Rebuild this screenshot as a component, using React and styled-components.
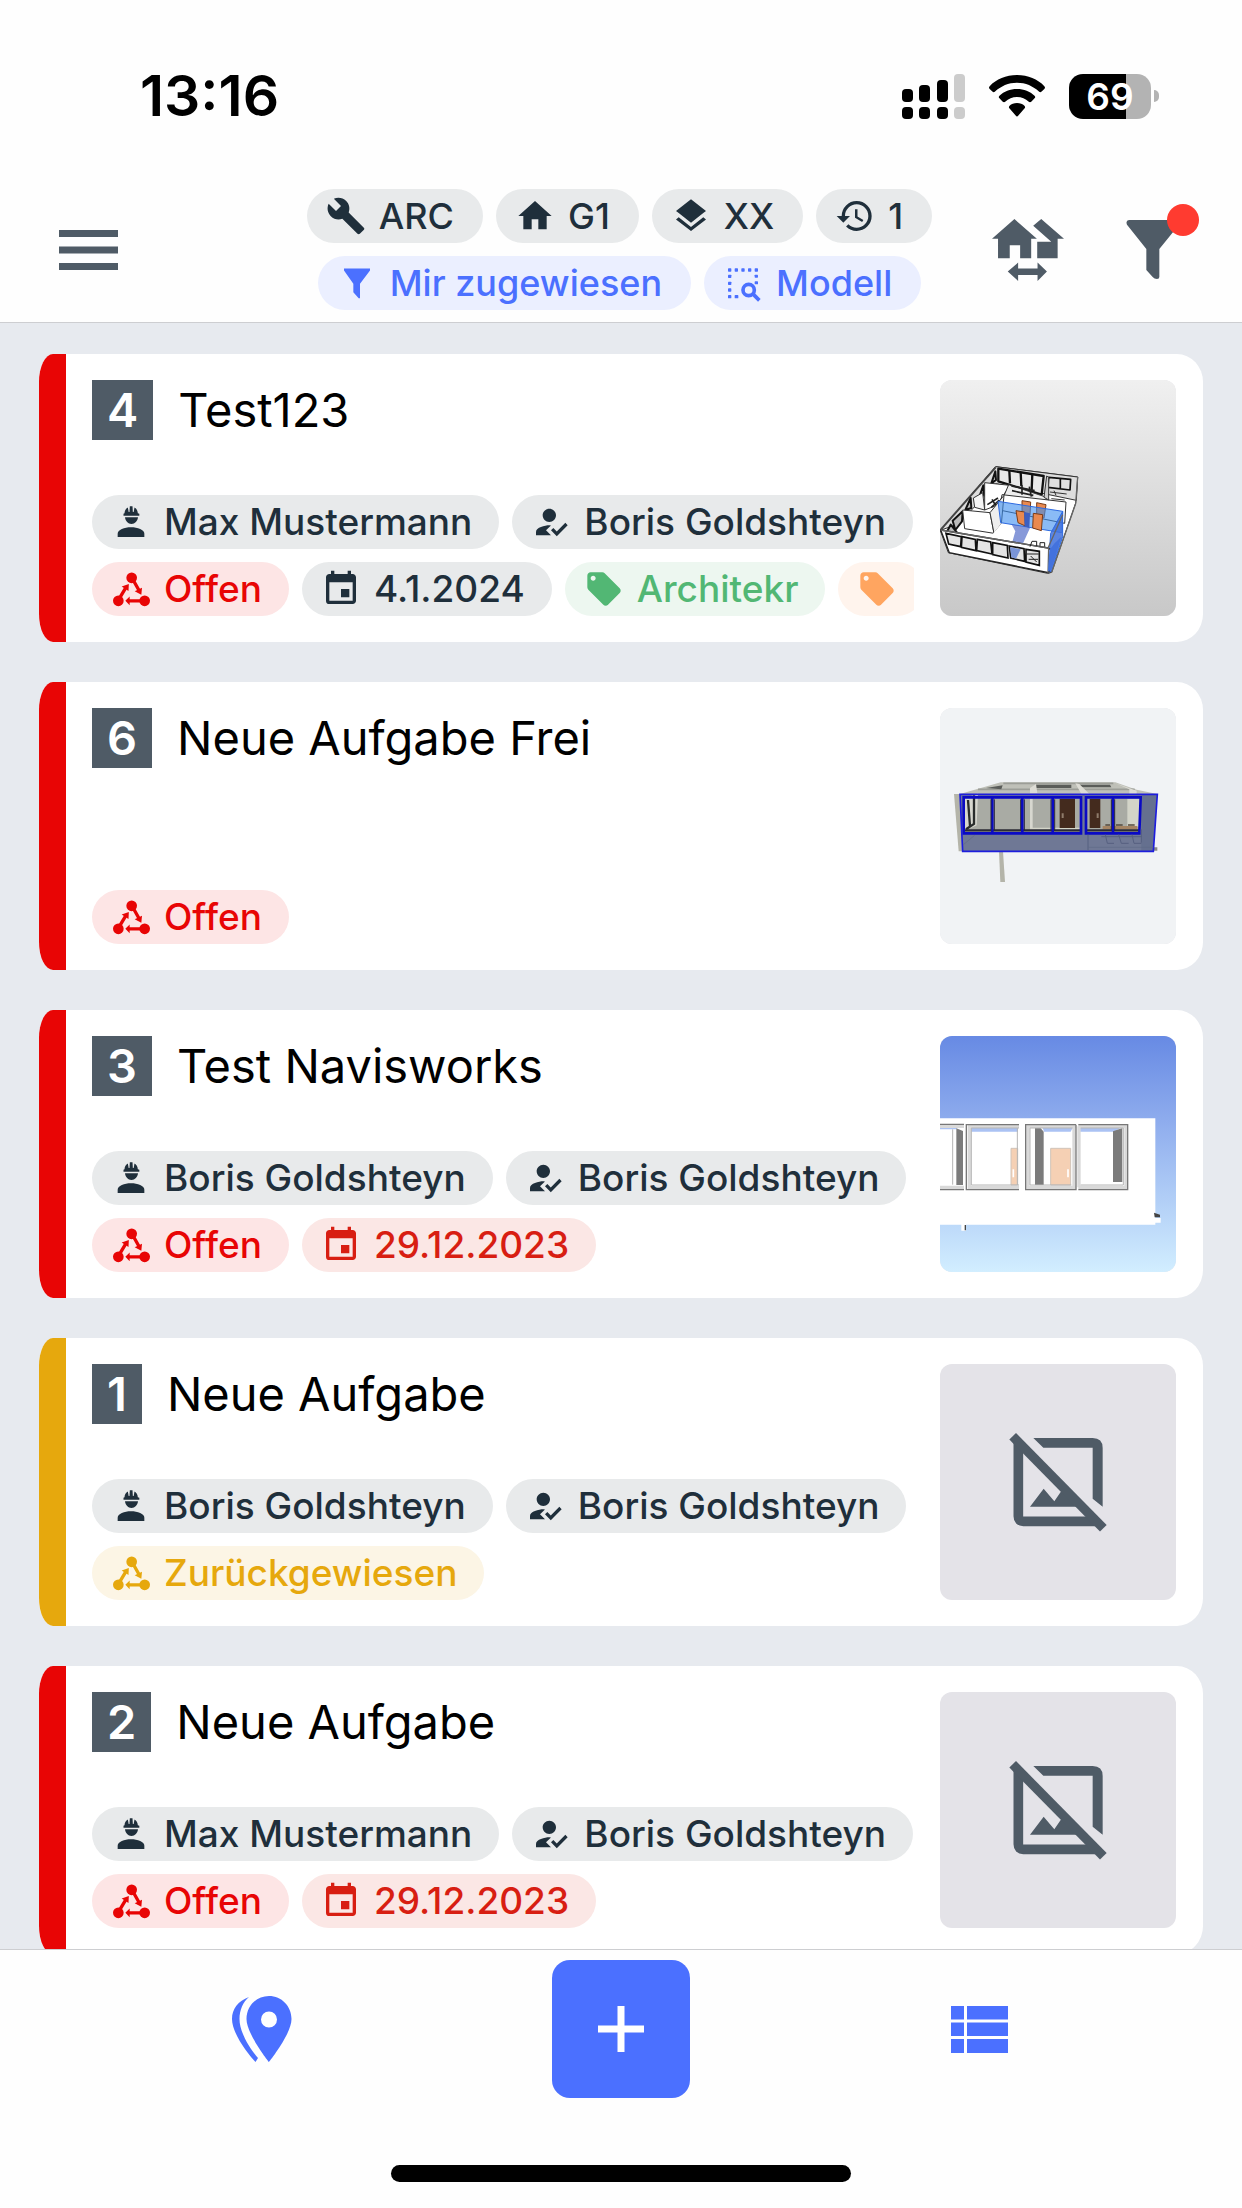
import React from "react";
import styled, { createGlobalStyle } from "styled-components";
import {
	MdBuild,
	MdEvent,
	MdHistory,
	MdHome,
	MdHowToReg,
	MdLayers,
	MdLocalOffer,
} from "react-icons/md";

const tones = {
	neutral: { color: "#1f2f3b", background: "#e8eaeb" },
	primary: { color: "#4b70ff", background: "#ebefff" },
	open: { color: "#e80505", background: "#fde5e5" },
	overdue: { color: "#d81e12", background: "#fbe7e5" },
	rejected: { color: "#e6a80d", background: "#fcf5e5" },
	green: { color: "#52b774", background: "#edf7f0" },
	orange: { color: "#ffa560", background: "#fff4ed" },
};

const filters = [
	[
		{ icon: MdBuild, label: "ARC" },
		{ icon: MdHome, label: "G1" },
		{ icon: MdLayers, label: "XX" },
		{ icon: MdHistory, label: "1" },
	],
	[
		{ icon: FunnelIcon, label: "Mir zugewiesen", tone: "primary" },
		{ icon: SelectSearchIcon, label: "Modell", tone: "primary" },
	],
];

const worker = (label) => ({ icon: WorkerIcon, label });
const assignee = (label) => ({ icon: MdHowToReg, label });
const status = (label, tone) => ({ icon: WorkflowIcon, label, tone });
const date = (label, tone) => ({ icon: MdEvent, label, tone });
const tag = (label, tone) => ({ icon: MdLocalOffer, label, tone });

const tasks = [
	{
		number: 4,
		title: "Test123",
		color: "#e80505",
		preview: FloorPlanPreview,
		rows: [
			[worker("Max Mustermann"), assignee("Boris Goldshteyn")],
			[
				status("Offen", "open"),
				date("4.1.2024"),
				tag("Architekr", "green"),
				tag("", "orange"),
			],
		],
	},
	{
		number: 6,
		title: "Neue Aufgabe Frei",
		color: "#e80505",
		preview: FacadePreview,
		rows: [[status("Offen", "open")]],
	},
	{
		number: 3,
		title: "Test Navisworks",
		color: "#e80505",
		preview: NavisworksPreview,
		rows: [
			[worker("Boris Goldshteyn"), assignee("Boris Goldshteyn")],
			[status("Offen", "open"), date("29.12.2023", "overdue")],
		],
	},
	{
		number: 1,
		title: "Neue Aufgabe",
		color: "#e6a80d",
		rows: [
			[worker("Boris Goldshteyn"), assignee("Boris Goldshteyn")],
			[status("Zurückgewiesen", "rejected")],
		],
	},
	{
		number: 2,
		title: "Neue Aufgabe",
		color: "#e80505",
		rows: [
			[worker("Max Mustermann"), assignee("Boris Goldshteyn")],
			[status("Offen", "open"), date("29.12.2023", "overdue")],
		],
	},
];

function App() {
	return (
		<>
			<GlobalStyle />
			<Screen>
				<Header>
					<StatusBar />
					<Toolbar>
						<IconButton aria-label="Menü">
							<MenuIcon />
						</IconButton>
						<ChipRows>
							{filters.map((row, i) => (
								<ChipRow key={i}>
									{row.map(({ icon: Icon, label, tone = "neutral" }) => (
										<FilterChip key={label} $tone={tone}>
											<Icon />
											{label}
										</FilterChip>
									))}
								</ChipRow>
							))}
						</ChipRows>
						<Actions>
							<IconButton aria-label="Projekt wechseln">
								<SwapHomeIcon />
							</IconButton>
							<IconButton aria-label="Filter">
								<BigFunnelIcon />
								<Dot />
							</IconButton>
						</Actions>
					</Toolbar>
				</Header>
				<TaskList>
					{tasks.map((task) => (
						<TaskCard key={task.number} {...task} />
					))}
				</TaskList>
				<Footer>
					<Nav>
						<IconButton aria-label="Karte">
							<PinsIcon />
						</IconButton>
						<AddButton aria-label="Neue Aufgabe">
							<PlusIcon />
						</AddButton>
						<IconButton aria-label="Liste">
							<ListIcon />
						</IconButton>
					</Nav>
					<HomeIndicator />
				</Footer>
			</Screen>
		</>
	);
}

export default App;

function StatusBar() {
	return (
		<StatusRow>
			<Time>13:16</Time>
			<StatusIcons>
				<SignalIcon />
				<WifiIcon />
				<Battery>
					<BatteryBody $level={69}>69</BatteryBody>
					<BatteryCap />
				</Battery>
			</StatusIcons>
		</StatusRow>
	);
}

function TaskCard({ number, title, color, preview: Preview, rows }) {
	return (
		<Card>
			<Stripe $color={color} />
			<CardBody>
				<TitleRow>
					<Number>{number}</Number>
					<Title>{title}</Title>
				</TitleRow>
				<ChipRows>
					{rows.map((row, i) => (
						<ChipRow key={i}>
							{row.map(({ icon: Icon, label, tone = "neutral" }, j) => (
								<Chip key={j} $tone={tone}>
									<Icon />
									{label}
								</Chip>
							))}
						</ChipRow>
					))}
				</ChipRows>
			</CardBody>
			<Thumb>{Preview ? <Preview /> : <NoImageIcon />}</Thumb>
		</Card>
	);
}

/* Icons */

function MenuIcon() {
	return (
		<svg width="59" height="40" viewBox="0 0 59 40" fill="currentColor">
			<path d="M0 0h59v7H0zM0 16.500h59v7H0zM0 33h59v7H0z" />
		</svg>
	);
}

function FunnelIcon() {
	return (
		<svg viewBox="0 0 24 24" fill="currentColor">
			<path d="M4.200 3.300h15.600v1.200l-6 8v8.600h-.8l-3.200-3.600v-5l-5.600-8z" />
		</svg>
	);
}

function SelectSearchIcon() {
	const steps = [270, 290, 310, 330, 350];
	return (
		<svg viewBox="255 278 120 120" fill="currentColor">
			{steps.map((x) => (
				<rect key={x} x={x} y="294" width="10" height="10" rx="2" />
			))}
			{[313, 333].map((y) => (
				<rect key={y} x="350" y={y} width="10" height="9" rx="2" />
			))}
			{[313, 334, 354, 374].map((y) => (
				<rect key={y} x="270" y={y} width="10" height="10" rx="2" />
			))}
			<rect x="290" y="374" width="11" height="10" rx="2" />
			<circle cx="332" cy="359" r="17" fill="none" stroke="currentColor" strokeWidth="11" />
			<path d="M344 370l20 20" stroke="currentColor" strokeWidth="11" />
		</svg>
	);
}

function WorkerIcon() {
	return (
		<svg viewBox="0 0 24 24" fill="currentColor">
			<path d="M7.500 8.200V7l.6-.2c.1-1.700.8-2.900 2-3.500l.5 2.700h.5l.2-3.500h1.600l.2 3.500h.5l.5-2.700c1.200.6 1.900 1.800 2 3.500l.9.2v1.200z" />
			<path d="M8.400 9.200h7.800c-.3 2.300-1.800 4-3.900 4s-3.600-1.700-3.900-4z" />
			<path d="M4 21v-2c0-2.300 4-3.800 8-3.800s8 1.500 8 3.800v2z" />
		</svg>
	);
}

function WorkflowIcon() {
	return (
		<svg viewBox="0 0 24 24" fill="currentColor">
			<circle cx="12.400" cy="5.300" r="3.200" />
			<circle cx="4.400" cy="19.100" r="3.200" />
			<circle cx="20.200" cy="19.100" r="3.200" />
			<path
				d="M5.400 17l3.600-6M13.800 7.500l3.400 6M18 19.100h-7.500"
				stroke="currentColor"
				strokeWidth="2"
			/>
			<path d="M10.700 9l-4.300 1.500 4.100 2.700zM18.200 15.400l.4-4.200-4.400 2.200zM8.600 19.100l2.600-2.600v5.200z" />
		</svg>
	);
}

function SwapHomeIcon() {
	return (
		<svg width="72" height="62" viewBox="399 510 215 185" fill="currentColor">
			<path d="M466 510l67 59h-17v58h-33v-39h-31v39h-35v-58h-18z" />
			<path d="M546 510l68 59h-19v58h-61v-49h42l-54-48z" />
			<path d="M446 667l31-27v18h58v-18l28 27-28 28v-18h-58v18z" />
		</svg>
	);
}

function BigFunnelIcon() {
	return (
		<svg width="54" height="59" viewBox="0 0 160 177" fill="currentColor">
			<path d="M8 0h144q12 2 6 14L99 87v84q0 6-7 6-8 0-13-6l-19-21V87L2 14Q-3 2 8 0z" />
		</svg>
	);
}

function SignalIcon() {
	return (
		<svg width="63" height="45" viewBox="0 0 63 45">
			<rect x="0" y="15" width="11" height="13" rx="4" />
			<rect x="17" y="11" width="11" height="17" rx="4" />
			<rect x="35" y="6" width="11" height="22" rx="4" />
			<rect x="52" y="0" width="11" height="28" rx="4" fill="#cccccc" />
			<rect x="0" y="33" width="11" height="12" rx="4" />
			<rect x="17" y="33" width="11" height="12" rx="4" />
			<rect x="35" y="33" width="11" height="12" rx="4" />
			<rect x="52" y="33" width="11" height="12" rx="4" fill="#cccccc" />
		</svg>
	);
}

function WifiIcon() {
	return (
		<svg width="56" height="42" viewBox="388 74 166 124">
			<path d="M471 74c33 0 61 12 81 33q4 4 0 8l-8 8q-4 4-8 0c-17-16-40-26-65-26s-48 10-65 26q-4 4-8 0l-8-8q-4-4 0-8c20-21 48-33 81-33z" />
			<path d="M471 115c21 0 38 7 52 20q4 4 0 8l-9 9q-4 4-8 1c-10-9-21-14-35-14s-25 5-35 14q-4 3-8-1l-9-9q-4-4 0-8c14-13 31-20 52-20z" />
			<path d="M471 157c9 0 17 3 22 8q4 4 0 8l-18 21q-4 6-8 0l-18-21q-4-4 0-8c5-5 13-8 22-8z" />
		</svg>
	);
}

function NoImageIcon() {
	return (
		<svg width="98" height="99" viewBox="238 248 292 297" fill="#4f5b66">
			<path
				d="M265 272v226q0 15 15 15h215"
				fill="none"
				stroke="#4f5b66"
				strokeWidth="29"
			/>
			<path d="M310 263h178q30 0 30 30v176l-30-24V292H340z" />
			<path d="M300 469l41-54 32 38 19-28 30-4 36 48z" />
			<path d="M248 258l272 276" stroke="#4f5b66" strokeWidth="28" />
		</svg>
	);
}

function PinsIcon() {
	return (
		<svg width="60" height="66" viewBox="0 0 60 66" fill="currentColor">
			<path
				fillRule="evenodd"
				d="M37 0C24.500 0 14.500 10 14.500 23 14.500 38 37 66 37 66s22.500-28 22.500-43C59.500 10 49.500 0 37 0zm0 15.500a8 8 0 1 1 0 16 8 8 0 0 1 0-16z"
			/>
			<path d="M17 1C6 5 0 13 0 23c0 15 17 36 23.500 43l2.500-4C19 54 7.500 37 7.500 23 7.500 14 11 6 17 1z" />
		</svg>
	);
}

function PlusIcon() {
	return (
		<svg width="46" height="46" viewBox="0 0 46 46" fill="currentColor">
			<path d="M19.500 0h7v19.500H46v7H26.500V46h-7V26.500H0v-7h19.500z" />
		</svg>
	);
}

function ListIcon() {
	return (
		<svg width="57" height="47" viewBox="0 0 57 47" fill="currentColor">
			<path d="M0 0h13v13.500H0zM16 0h41v13.500H16zM0 16.500h13V30H0zM16 16.500h41V30H16zM0 33h13v14H0zM16 33h41v14H16z" />
		</svg>
	);
}

/* Model previews */

function FloorPlanPreview() {
	return (
		<svg width="100%" height="100%" viewBox="30 30 708 708" role="img" aria-label="Grundriss">
			<defs>
				<linearGradient id="plan-bg" x1="0" y1="0" x2="0" y2="1">
					<stop offset="0" stopColor="#f0f0f0" />
					<stop offset="1" stopColor="#c8c8c8" />
				</linearGradient>
			</defs>
			<rect x="30" y="30" width="708" height="708" fill="url(#plan-bg)" />
			<g stroke="#333" strokeWidth="3" strokeLinejoin="round">
				<path d="M197 290l246 31-6 78-72 208-12 3-298-62-24-66z" fill="#fff" />
				<path d="M197 290l246 31-4 70-242-50-110 120-56 20z" fill="#ddd" />
				<path d="M205 296l136 22-6 56-130-40z" fill="#e9e9e9" stroke="#111" strokeWidth="7" />
				<path d="M238 302l2 38M272 306l2 42M307 312l-2 48" stroke="#111" strokeWidth="7" />
				<path d="M356 322l66 6-2 32-66-8zM391 324v32" fill="#e0e0e0" stroke="#111" strokeWidth="5" />
				<path d="M197 292l-164 186" stroke="#444" strokeWidth="6" />
				<path d="M196 304l2 26-14 10zM160 346l2 26-18 20zM122 384l2 30-18 6zM98 424l-2 30-20 26-8-28zM62 464l24 30-34 34-8-30z" fill="#bbb" stroke="#111" strokeWidth="6" />
				<path d="M164 338l76 8-40 60-36 14z" fill="#fff" />
				<path d="M130 384l28-16 6 52-30-8z" fill="#f4f4f4" />
				<path d="M236 344l114 38-4 22-126-22z" fill="#eee" />
				<path d="M244 348l70 14M246 362l64 14M276 346v28M298 350l6 30" stroke="#222" strokeWidth="5" />
				<path d="M172 404l32-20M184 412l24-22M186 388l12 20" stroke="#222" strokeWidth="5" />
				<path d="M216 374l140 16 52 6-4 64-196-40z" fill="#fff" />
				<path d="M350 318l-8 64 14 8v-68z" fill="#ccc" />
				<path d="M360 366l50 6M364 386l40 4M372 362l6 14" />
				<path d="M98 420l82 8 12 62-88-14z" fill="#fff" />
				<path d="M180 428l42-52-8 86-22 28z" fill="#eee" />
				<path d="M190 490l26-32 160 34-18 60-192-36z" fill="#fff" stroke="none" />
			</g>
			<g stroke="#7a3b16" strokeWidth="3" fill="#e9894f">
				<path d="M276 392l26 4-2 40-24-4zM320 398l28 6-6 40-22-6z" />
			</g>
			<g stroke="#2e6ae0" strokeWidth="3">
				<path d="M204 394l194 30-2 64-184-30z" fill="#3c8df0" fillOpacity=".6" />
				<path d="M244 462l56 12-40 88-24-8 20-70z" fill="#4662c4" fillOpacity=".65" stroke="none" />
				<path d="M362 490l36-66v76l-34 104-10 2z" fill="#3f70dc" fillOpacity=".85" />
			</g>
			<g stroke="#7a3b16" strokeWidth="3" fill="#e9894f">
				<path d="M258 422l26 4 2 42-22-10zM310 430l28 4-4 48-26-8z" />
			</g>
			<path d="M282 426l18 4-2 44-14-4z" fill="#3d5fc0" />
			<g fill="none" stroke="#222" strokeWidth="4">
				<path d="M32 480l322 54 12 8-10 66-298-60z" fill="#fff" />
				<path d="M32 480l322 54 44-100M356 534l-2 76M443 321l-6 80-72 206" stroke="#666" />
				<path d="M48 490l46 10-2 30-36-8zM96 500l40 8 2 34-44-10zM142 508l40 8 4 36-46-10zM188 518l44 8 2 38-46-10zM238 528l44 8 2 38-42-10zM288 538l40 6v42l-40-10z" fill="#e4e4e4" stroke="#111" strokeWidth="5" />
				<path d="M290 552h36M296 568h28M300 530l6-16h14v14M330 530v-12h14v12M302 558l18 18" strokeWidth="3" />
			</g>
			<path d="M240 532l32 6-14 28-14-4z" fill="#7a95d8" />
			<path d="M358 540l16-20 20-20-30 100-10 4z" fill="#4372dd" />
		</svg>
	);
}

function FacadePreview() {
	return (
		<svg width="100%" height="100%" viewBox="30 24 708 708" role="img" aria-label="Fassade">
			<rect x="30" y="24" width="708" height="708" fill="#f1f3f5" />
			<path d="M212 247h344l64 22 62 13H90z" fill="#bfc0b8" />
			<path d="M220 250h330M144 268h470" stroke="#9c9d97" strokeWidth="5" />
			<path d="M168 264l50-8-4 12zM318 254h106v10H314zM448 254h92l4 8h-92z" fill="#5a5c59" />
			<path d="M300 264l18-12 4 28h-22zM436 250l12 2 30 30h-24zM556 250l64 22v10h-22v-14z" fill="#dddcd5" />
			<path d="M72 282h20l8 172H86z" fill="#b4b4a9" />
			<path d="M207 454h12l6 92h-14z" fill="#b4b4a9" />
			<path d="M668 442h14v10h-14z" fill="#8b8c88" />
			<path d="M90 283h592l-12 171H98z" fill="#6f7895" />
			<path d="M634 285h46l-12 168h-34z" fill="#65708f" />
			<path d="M100 293h354v104H100zM466 293h166v104H466z" fill="#a9aba4" />
			<path d="M102 296l42-16-4 96-38 18zM300 296h8v88h-8z" fill="#d7d7cf" />
			<path d="M114 300l6 78M132 286v86l-24 16" stroke="#292c2c" strokeWidth="7" fill="none" />
			<path d="M300 383h150v8H300zM592 296h38v84h-38z" fill="#d3d4c8" />
			<path d="M389 296h46v88h-46zM479 296h32v88h-32z" fill="#442b1e" />
			<path d="M395 340h6v14h-6zM500 340h6v14h-6z" fill="#8f7c6b" />
			<path d="M518 378h104v10H518z" fill="#a58463" />
			<path d="M526 375h14M558 375h20M594 375h20" stroke="#54493d" strokeWidth="5" />
			<path d="M100 391h354M466 391h164" stroke="#2b2b35" strokeWidth="7" />
			<path
				d="M101 292h352v108H101zM187 292v108M277 292v108M368 292v108M468 292h164l-4 108H468zM549 292v108"
				fill="none"
				stroke="#0a0ac4"
				strokeWidth="8"
			/>
			<path
				d="M183 298v94M193 298v94M272 298v94M283 298v94M363 298v94M374 298v94M544 298v94M554 298v94"
				stroke="#25253f"
				strokeWidth="3"
			/>
			<path d="M90 283h592l-12 171H98z" fill="none" stroke="#1d1ddd" strokeWidth="5" />
			<path
				d="M514 410h122M526 404l6 26h20M566 404l8 26h22M606 404l6 26h22M474 404v48M634 388v40"
				fill="none"
				stroke="#566080"
				strokeWidth="3"
			/>
			<path d="M474 442h196M100 434l34-28" stroke="#5f6987" strokeWidth="2" />
		</svg>
	);
}

function NavisworksPreview() {
	return (
		<svg width="100%" height="100%" viewBox="30 48 708 708" role="img" aria-label="Ansicht">
			<defs>
				<linearGradient id="sky" x1="0" y1="0" x2="0" y2="1">
					<stop offset="0" stopColor="#678ae4" />
					<stop offset=".35" stopColor="#8dabed" />
					<stop offset="1" stopColor="#d2eeff" />
				</linearGradient>
			</defs>
			<rect x="30" y="48" width="708" height="708" fill="url(#sky)" />
			<path d="M30 295h646v299h16v14h-16v6H30zM94 614h14v18H94z" fill="#fff" />
			<path d="M672 578l18 6v8h-16zM104 615h4v16h-4z" fill="#444" />
			<path d="M124 323h140v12H124zM338 323h90l-6 12h-80zM450 323h122l-20 12H450zM30 323h50v5H30z" fill="#abc2f3" />
			<g fill="#f5d0b4" stroke="#d0c4ba" strokeWidth="3">
				<path d="M243 385h20v110h-20zM362 385h60v110h-60z" />
			</g>
			<path d="M79 325l20 8v162H79zM315 323h16l10 12v160h-26zM549 334l28-10v162h-28z" fill="#7b7b7b" />
			<g fill="none" stroke="#d9d9d9" strokeWidth="10">
				<path d="M30 319h72M30 502h72M267 319H118v183h149M438 319H294v183h144M432 319v183M445 319h143v183H445M447 319v183" />
			</g>
			<path
				d="M30 313h72M30 509h72M267 314H109v195h158M438 314H287v195h151V314M445 314h148v195H445"
				fill="none"
				stroke="#777"
				strokeWidth="4"
			/>
			<path
				d="M267 324H124v171h143M428 324H300v171h124M452 324h128v171H452M262 324v171M68 328v166"
				fill="none"
				stroke="#b5b5b5"
				strokeWidth="3"
			/>
			<path d="M250 448v24M414 448v24" stroke="#fff" strokeWidth="5" />
		</svg>
	);
}

const GlobalStyle = createGlobalStyle`
	* {
		box-sizing: border-box;
	}

	body {
		margin: 0;
		font-family: Inter, "Liberation Sans", sans-serif;
		color: #000;
	}

	button {
		border: none;
		cursor: pointer;
		font: inherit;
		padding: 0;
	}
`;

const Screen = styled.div`
	background: #e7eaef;
	display: flex;
	flex-direction: column;
	height: 100vh;
`;

const Header = styled.header`
	background: #fefefe;
	border-bottom: 1px solid #cdced1;
	display: flex;
	flex-direction: column;
	gap: 66px;
	padding: 69px 0 12px;
`;

const StatusRow = styled.div`
	align-items: center;
	display: flex;
	height: 54px;
	justify-content: space-between;
	padding: 0 83px 0 140px;
`;

const Time = styled.time`
	font-size: 57px;
	font-weight: 600;
	line-height: 54px;
`;

const StatusIcons = styled.div`
	align-items: center;
	display: flex;
	gap: 24px;
`;

const Battery = styled.div`
	align-items: center;
	display: flex;
	gap: 3px;
`;

const BatteryBody = styled.div`
	background: linear-gradient(
		to right,
		#000 ${(props) => props.$level}%,
		#b3b3b3 ${(props) => props.$level}%
	);
	border-radius: 14px;
	color: #fff;
	font-size: 37px;
	font-weight: 600;
	height: 45px;
	line-height: 45px;
	text-align: center;
	width: 82px;
`;

const BatteryCap = styled.div`
	background: #b3b3b3;
	border-radius: 0 6px 6px 0;
	height: 12px;
	width: 5px;
`;

const Toolbar = styled.div`
	align-items: center;
	color: #4f5b66;
	display: grid;
	grid-template-columns: 1fr auto 1fr;
	justify-items: start;
	padding: 0 62px 0 59px;
`;

const IconButton = styled.button`
	background: none;
	color: inherit;
	display: flex;
	position: relative;
`;

const Actions = styled.div`
	align-items: center;
	display: flex;
	gap: 62px;
	justify-self: end;
`;

const Dot = styled.span`
	background: #ff3b30;
	border-radius: 50%;
	height: 32px;
	position: absolute;
	right: -19px;
	top: -16px;
	width: 32px;
`;

const ChipRows = styled.div`
	display: flex;
	flex-direction: column;
	gap: 13px;
`;

const ChipRow = styled.div`
	display: flex;
	gap: 13px;

	${Toolbar} & {
		justify-content: center;
	}
`;

const Chip = styled.span`
	align-items: center;
	background: ${(props) => tones[props.$tone].background};
	border-radius: 27px;
	color: ${(props) => tones[props.$tone].color};
	display: flex;
	flex-shrink: 0;
	font-size: 37px;
	font-weight: 500;
	gap: 13px;
	height: 54px;
	line-height: 52px;
	padding: 0 27px 0 19px;
	white-space: nowrap;

	svg {
		height: 40px;
		width: 40px;
	}
`;

const FilterChip = styled(Chip).attrs({ as: "button" })`
	font-size: 36px;
	padding: 0 29px 0 19px;
`;

const TaskList = styled.ul`
	display: flex;
	flex: 1;
	flex-direction: column;
	gap: 40px;
	list-style: none;
	margin: 0;
	min-height: 0;
	overflow: hidden;
	padding: 31px 39px 0;
`;

const Card = styled.li`
	background: #fff;
	border-radius: 14px 26px 26px 14px / 28px;
	display: flex;
	flex-shrink: 0;
	gap: 26px;
	overflow: hidden;
	padding-right: 27px;
`;

const Stripe = styled.div`
	background: ${(props) => props.$color};
	flex-shrink: 0;
	width: 27px;
`;

const CardBody = styled.div`
	display: flex;
	flex: 1;
	flex-direction: column;
	justify-content: space-between;
	margin: 26px 0;
	min-width: 0;
	overflow: hidden;
`;

const TitleRow = styled.div`
	display: flex;
	gap: 25px;
`;

const Number = styled.span`
	background: #4f5b66;
	color: #fff;
	font-size: 47px;
	font-weight: 600;
	line-height: 60px;
	padding: 0 15px;
`;

const Title = styled.h2`
	font-size: 47px;
	font-weight: 400;
	line-height: 60px;
	margin: 0;
`;

const Thumb = styled.div`
	align-items: center;
	background: #e4e3e8;
	border-radius: 12px;
	display: flex;
	flex-shrink: 0;
	height: 236px;
	justify-content: center;
	margin: 26px 0;
	overflow: hidden;
	width: 236px;
`;

const Footer = styled.footer`
	align-items: center;
	background: #fefefe;
	border-top: 1px solid #cdced1;
	display: flex;
	flex-direction: column;
	gap: 67px;
	padding: 10px 0 26px;
`;

const Nav = styled.nav`
	align-items: center;
	color: #4b70ff;
	display: grid;
	grid-template-columns: repeat(3, 1fr);
	justify-items: center;
	padding: 0 83px;
	width: 100%;
`;

const AddButton = styled.button`
	align-items: center;
	background: #4b70ff;
	border-radius: 18px;
	color: #fff;
	display: flex;
	height: 138px;
	justify-content: center;
	width: 138px;
`;

const HomeIndicator = styled.div`
	background: #000;
	border-radius: 9px;
	height: 17px;
	width: 37%;
`;
